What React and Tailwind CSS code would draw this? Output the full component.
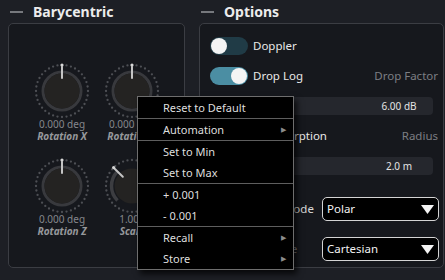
import React from "react";

function arcPath(cx, cy, r, a1, a2) {
  const p = (a) => {
    const t = (a * Math.PI) / 180;
    return [cx + r * Math.sin(t), cy - r * Math.cos(t)];
  };
  const [x1, y1] = p(a1);
  const [x2, y2] = p(a2);
  const large = a2 - a1 > 180 ? 1 : 0;
  return `M ${x1} ${y1} A ${r} ${r} 0 ${large} 1 ${x2} ${y2}`;
}

function Knob({ angle = 0, full = true }) {
  const cx = 28;
  const cy = 28;
  const N = 36;
  const dots = [];
  for (let i = 0; i < N; i++) {
    const a = (i / N) * 2 * Math.PI;
    dots.push(
      <circle
        key={i}
        cx={cx + 26 * Math.sin(a)}
        cy={cy - 26 * Math.cos(a)}
        r={1.15}
        fill="#4d4f54"
      />
    );
  }
  const t = (angle * Math.PI) / 180;
  const pt = (r) => [cx + r * Math.sin(t), cy - r * Math.cos(t)];
  const [x1, y1] = pt(24.5);
  const [x2, y2] = pt(13);
  const [dx, dy] = pt(26);
  return (
    <svg width="56" height="56" viewBox="0 0 56 56">
      {dots}
      {full ? (
        <circle cx={cx} cy={cy} r="19" fill="none" stroke="#38393d" strokeWidth="3" />
      ) : (
        <path d={arcPath(cx, cy, 20.5, -135, angle)} fill="none" stroke="#3c3d41" strokeWidth="3.5" />
      )}
      <circle cx={cx} cy={cy} r="17.5" fill="#242322" />
      <line x1={x1} y1={y1} x2={x2} y2={y2} stroke="#c4c4c4" strokeWidth="2" strokeLinecap="round" />
      <circle cx={dx} cy={dy} r="1.6" fill="#d6d6d6" />
    </svg>
  );
}

function KnobCell({ value, label, angle, full }) {
  return (
    <div className="flex w-[70px] flex-col items-center">
      <Knob angle={angle} full={full} />
      <div className="h-[11px] text-[10px] leading-[11px] text-[#85878c] whitespace-nowrap">{value}</div>
      <div className="h-[12px] text-[10px] leading-[12px] font-bold italic text-[#96989c] whitespace-nowrap">{label}</div>
    </div>
  );
}

function Header({ title }) {
  return (
    <div className="flex h-[23px] items-center">
      <div className="ml-[2px] h-[2px] w-[13px] bg-[#76787d]" />
      <div className="ml-[10px] text-[14px] font-bold leading-none text-[#ececec]">{title}</div>
    </div>
  );
}

function Toggle({ on }) {
  return (
    <div
      className={
        on
          ? "flex h-[18px] w-[38px] shrink-0 items-center justify-end rounded-full bg-[#4b8ea3] px-[1px]"
          : "flex h-[18px] w-[38px] shrink-0 items-center justify-start rounded-full bg-[#203b46] px-[1px]"
      }
    >
      <div className="h-[16px] w-[16px] rounded-full bg-[#f4f4f4]" />
    </div>
  );
}

function Slider({ value }) {
  return (
    <div className="mt-[12px] flex h-[18px] items-center justify-end rounded-[4px] bg-[#25272d]">
      <div className="w-[68px] text-center text-[10px] leading-none text-[#e4e4e4]">{value}</div>
    </div>
  );
}

function Dropdown({ value }) {
  return (
    <div className="ml-auto mr-[-6px] flex h-[24px] w-[117px] items-center rounded-[5px] border-[1.5px] border-[#d4d4d4] bg-black pl-[4px] pr-[4px]">
      <span className="text-[11.5px] leading-none text-[#f2f2f2]">{value}</span>
      <svg className="ml-auto" width="13" height="9" viewBox="0 0 13 9">
        <polygon points="0,0 13,0 6.5,9" fill="#f4f4f4" />
      </svg>
    </div>
  );
}

function Item({ children, arrow }) {
  return (
    <div className="flex h-[21px] items-center pl-[25px] pr-[7px] text-[11px] leading-none text-[#dedede]">
      <span>{children}</span>
      {arrow && <span className="ml-auto text-[7px] text-[#8c8c8c]">▶</span>}
    </div>
  );
}

function Sep() {
  return <div className="h-px bg-[#5e5e5e]" />;
}

export default function App() {
  return (
    <div className="relative h-[280px] w-[445px] overflow-hidden bg-[#1d1f25] font-['Noto_Sans',sans-serif] text-[#e8e8e8]">
      <div className="flex gap-[14px] pl-[8px]">
        <div className="flex w-[177px] flex-col">
          <Header title="Barycentric" />
          <div className="h-[245px] rounded-[5px] border border-[#3b3d43] bg-[#16181d] pl-[18px] pt-[39px]">
            <div className="grid grid-cols-[70px_70px] gap-y-[16px]">
              <KnobCell value="0.000 deg" label="Rotation X" angle={0} full />
              <KnobCell value="0.000 deg" label="Rotation Y" angle={0} full />
              <KnobCell value="0.000 deg" label="Rotation Z" angle={0} full />
              <KnobCell value="1.000" label="Scale" angle={-45} full={false} />
            </div>
          </div>
        </div>
        <div className="flex w-[245px] flex-col">
          <Header title="Options" />
          <div className="h-[245px] rounded-[5px] border border-[#3b3d43] bg-[#16181d] px-[10px] pt-[13px]">
            <div className="flex h-[18px] items-center">
              <Toggle on={false} />
              <span className="ml-[5px] text-[11.5px] leading-none">Doppler</span>
            </div>
            <div className="mt-[12px] flex h-[18px] items-center">
              <Toggle on />
              <span className="ml-[5px] text-[11.5px] leading-none">Drop Log</span>
              <span className="ml-auto mr-[-5px] text-[11.5px] leading-none text-[#7c7e83]">Drop Factor</span>
            </div>
            <Slider value="6.00 dB" />
            <div className="mt-[12px] flex h-[18px] items-center">
              <Toggle on={false} />
              <span className="ml-[1px] text-[11.5px] leading-none">Air Absorption</span>
              <span className="ml-auto mr-[-5px] text-[11.5px] leading-none text-[#7c7e83]">Radius</span>
            </div>
            <Slider value="2.0 m" />
            <div className="mt-[22px] flex h-[24px] items-center">
              <span className="ml-[10px] text-[11.5px] leading-none text-[#d8d8d8]">Coordinate Mode</span>
              <Dropdown value="Polar" />
            </div>
            <div className="mt-[16px] flex h-[24px] items-center">
              <span className="ml-[15px] text-[11.5px] leading-none text-[#8a8c90]">Position Type</span>
              <Dropdown value="Cartesian" />
            </div>
          </div>
        </div>
      </div>

      <div className="absolute left-[137px] top-[96px] w-[157px] border border-[#6e6e6e] bg-black shadow-[3px_4px_6px_rgba(0,0,0,0.75)]">
        <Item>Reset to Default</Item>
        <Sep />
        <Item arrow>Automation</Item>
        <Sep />
        <Item>Set to Min</Item>
        <Item>Set to Max</Item>
        <Sep />
        <Item>+ 0.001</Item>
        <Item>- 0.001</Item>
        <Sep />
        <Item arrow>Recall</Item>
        <Item arrow>Store</Item>
      </div>
    </div>
  );
}
